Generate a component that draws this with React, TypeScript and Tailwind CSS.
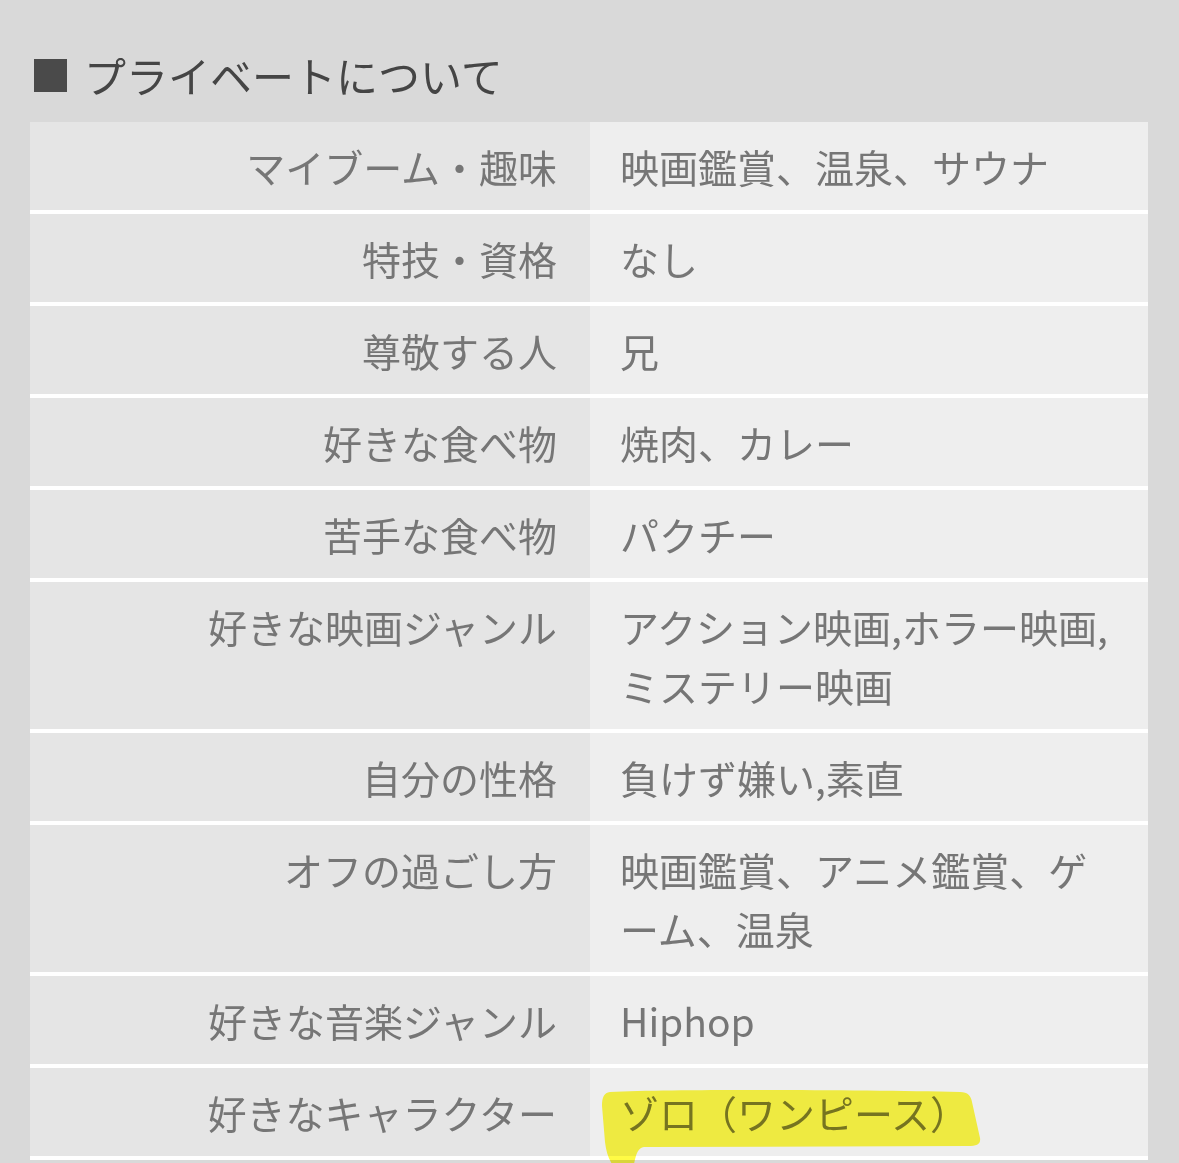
import React from "react";

type Row = { label: string; value: React.ReactNode };

const rows: Row[] = [
  { label: "マイブーム・趣味", value: "映画鑑賞、温泉、サウナ" },
  { label: "特技・資格", value: "なし" },
  { label: "尊敬する人", value: "兄" },
  { label: "好きな食べ物", value: "焼肉、カレー" },
  { label: "苦手な食べ物", value: "パクチー" },
  { label: "好きな映画ジャンル", value: "アクション映画,ホラー映画,ミステリー映画" },
  { label: "自分の性格", value: "負けず嫌い,素直" },
  { label: "オフの過ごし方", value: "映画鑑賞、アニメ鑑賞、ゲーム、温泉" },
  { label: "好きな音楽ジャンル", value: "Hiphop" },
  {
    label: "好きなキャラクター",
    value: (
      <span className="relative inline-block">
        ゾロ（ワンピース）
        {/* highlighter stroke */}
        <svg
          className="pointer-events-none absolute left-[-20px] top-[5px] h-[76px] w-[384px] mix-blend-multiply"
          viewBox="0 0 384 76"
        >
          <path
            d="M10 4 C80 1 260 2 360 4 C368 4 371 8 372 14 L380 50 C381 56 377 58 368 58 L44 59 C38 60 36 66 34 76 L12 76 C8 70 6 62 5 54 L2 18 C2 9 4 5 10 4 Z"
            fill="#fffb45"
          />
        </svg>
      </span>
    ),
  },
];

export default function App() {
  return (
    <div
      className="min-h-screen bg-[#d9d9d9] px-[30px] pt-[52px]"
      style={{ fontFamily: '"Noto Sans CJK JP", "Noto Sans", sans-serif' }}
    >
      <h2 className="mb-[24px] flex items-center gap-[17px] pl-[4px] text-[42px] leading-[46px] text-[#454545]">
        <span className="inline-block h-[33px] w-[33px] bg-[#4a4a4a]" aria-label="■" />
        <span>プライベートについて</span>
      </h2>

      <div className="w-[1118px]">
        {rows.map((row) => (
          <div key={row.label} className="flex border-b-[4px] border-white">
            <div className="w-[560px] shrink-0 bg-[#e5e5e5] py-[14.5px] pr-[33px] text-right text-[39px] leading-[59px] text-[#767676]">
              {row.label}
            </div>
            <div className="flex-1 bg-[#eeeeee] py-[14.5px] pl-[30px] pr-[30px] text-[39px] leading-[59px] text-[#767676]">
              {row.value}
            </div>
          </div>
        ))}
      </div>
    </div>
  );
}
